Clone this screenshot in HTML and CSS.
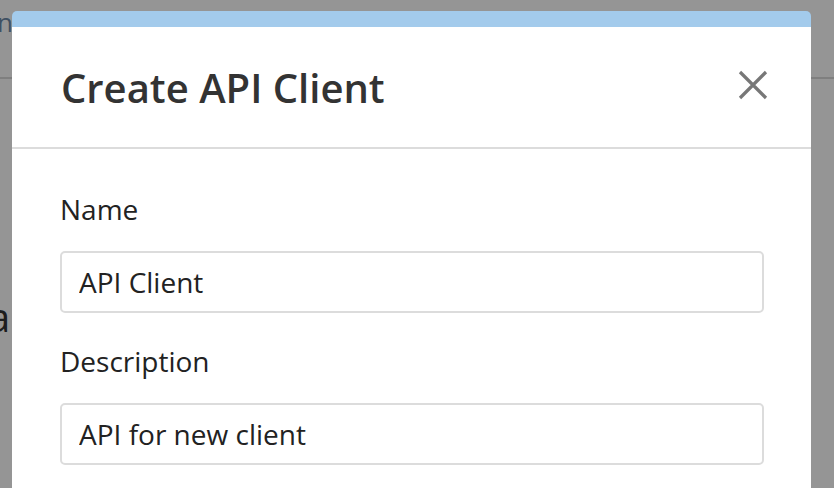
FILE: index.html
```html
<!DOCTYPE html>
<html lang="en">
<head>
    <meta charset="UTF-8">
    <meta name="viewport" content="width=device-width, initial-scale=1.0">
    <title>Create API Client</title>
    <link rel="stylesheet" href="styles.css">
</head>
<body>

    <!-- page behind the dialog -->
    <div class="page">
        <div class="page-top">
            <p class="page-note">nc was created from the cloud and loaded</p>
        </div>
        <p class="page-heading">a</p>
    </div>

    <div class="overlay"></div>

    <!-- Create API client dialog -->
    <div class="modal">
        <div class="modal-header">
            <h2>Create API Client</h2>
            <button class="close-btn" aria-label="Close">
                <svg width="30" height="30" viewBox="0 0 30 30">
                    <path d="M2 2 L28 28 M28 2 L2 28" stroke="#777" stroke-width="3.2" fill="none"/>
                </svg>
            </button>
        </div>
        <div class="modal-body">
            <div class="form-group">
                <label for="clientName">Name</label>
                <input type="text" id="clientName" value="API Client" />
            </div>
            <div class="form-group">
                <label for="clientDescription">Description</label>
                <input type="text" id="clientDescription" value="API for new client" />
            </div>
        </div>
    </div>

</body>
</html>
```

FILE: styles.css
```css
* {
    margin: 0;
    padding: 0;
    box-sizing: border-box;
}

body {
    font-family: 'Open Sans', 'Noto Sans', sans-serif;
    background-color: #fff;
    height: 488px;
    overflow: hidden;
}

.page-top {
    height: 79px;
    border-bottom: 2px solid #dadada;
}

.page-note {
    font-size: 26px;
    line-height: 36px;
    color: #6d8aa8;
    margin-left: -3px;
    padding-top: 4px;
    white-space: nowrap;
}

.page-heading {
    font-size: 40px;
    line-height: 48px;
    color: #333;
    margin-top: 214px;
    margin-left: -12px;
}

.overlay {
    position: fixed;
    inset: 0;
    background-color: rgba(0, 0, 0, 0.416);
}

.modal {
    position: absolute;
    left: 12px;
    top: 11px;
    width: 799px;
    height: 500px;
    background-color: #fff;
    border-top: 16px solid #a3cbec;
    border-radius: 5px 5px 0 0;
}

.modal-header {
    height: 122px;
    display: flex;
    align-items: center;
    justify-content: space-between;
    padding: 0 43px 0 49px;
    border-bottom: 2px solid #dcdcdc;
}

h2 {
    font-size: 40px;
    font-weight: 600;
    color: #333;
    margin-top: 1px;
}

.close-btn {
    background: none;
    border: none;
    cursor: pointer;
    display: flex;
    margin-top: -4px;
}

.modal-body {
    padding: 42px 47px 0 48px;
}

.form-group {
    margin-bottom: 30px;
}

label {
    display: block;
    font-size: 28px;
    line-height: 36px;
    color: #222;
    margin-bottom: 24px;
}

input[type="text"] {
    width: 100%;
    height: 62px;
    padding: 0 17px;
    font-family: 'Open Sans', 'Noto Sans', sans-serif;
    font-size: 28px;
    color: #222;
    border: 2px solid #dcdcdc;
    border-radius: 5px;
    outline: none;
    background-color: #fff;
}
```
